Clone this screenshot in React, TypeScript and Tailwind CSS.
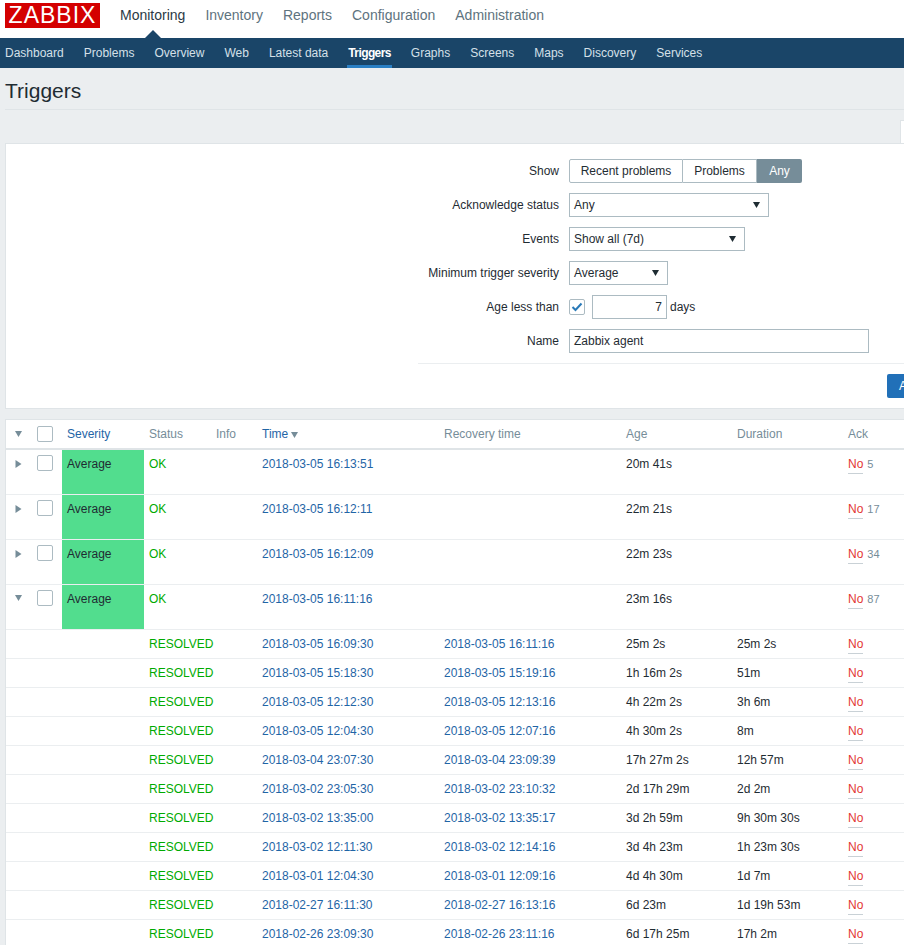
const font = "font-['Liberation_Sans',Arial,sans-serif]";

const mainTabs = ["Monitoring", "Inventory", "Reports", "Configuration", "Administration"];
const subTabs = ["Dashboard", "Problems", "Overview", "Web", "Latest data", "Triggers", "Graphs", "Screens", "Maps", "Discovery", "Services"];

const problems = [
  { time: "2018-03-05 16:13:51", age: "20m 41s", count: "5", open: false },
  { time: "2018-03-05 16:12:11", age: "22m 21s", count: "17", open: false },
  { time: "2018-03-05 16:12:09", age: "22m 23s", count: "34", open: false },
  { time: "2018-03-05 16:11:16", age: "23m 16s", count: "87", open: true },
];

const events = [
  ["2018-03-05 16:09:30", "2018-03-05 16:11:16", "25m 2s", "25m 2s"],
  ["2018-03-05 15:18:30", "2018-03-05 15:19:16", "1h 16m 2s", "51m"],
  ["2018-03-05 12:12:30", "2018-03-05 12:13:16", "4h 22m 2s", "3h 6m"],
  ["2018-03-05 12:04:30", "2018-03-05 12:07:16", "4h 30m 2s", "8m"],
  ["2018-03-04 23:07:30", "2018-03-04 23:09:39", "17h 27m 2s", "12h 57m"],
  ["2018-03-02 23:05:30", "2018-03-02 23:10:32", "2d 17h 29m", "2d 2m"],
  ["2018-03-02 13:35:00", "2018-03-02 13:35:17", "3d 2h 59m", "9h 30m 30s"],
  ["2018-03-02 12:11:30", "2018-03-02 12:14:16", "3d 4h 23m", "1h 23m 30s"],
  ["2018-03-01 12:04:30", "2018-03-01 12:09:16", "4d 4h 30m", "1d 7m"],
  ["2018-02-27 16:11:30", "2018-02-27 16:13:16", "6d 23m", "1d 19h 53m"],
  ["2018-02-26 23:09:30", "2018-02-26 23:11:16", "6d 17h 25m", "17h 2m"],
];

// first column is 1px short of the 57px gap because the table has a left border
const rowCols = "grid grid-cols-[56px_82px_67px_46px_182px_182px_111px_111px_1fr]";

function Caret({ className }: { className?: string }) {
  return (
    <svg width="7" height="6" viewBox="0 0 7 6" className={className}>
      <polygon points="0,0 7,0 3.5,6" fill="currentColor" />
    </svg>
  );
}

function Arrow({ className }: { className?: string }) {
  return (
    <svg width="7" height="8" viewBox="0 0 7 8" className={className}>
      <polygon points="0.5,0 6.5,4 0.5,8" fill="currentColor" />
    </svg>
  );
}

function Select({ value, width }: { value: string; width: string }) {
  return (
    <div className={`${width} h-6 border border-[#acbbc2] bg-white pl-1 pr-[8px] flex items-center justify-between text-[#1f2c33]`}>
      <span>{value}</span>
      <Caret className="text-[#1f2c33]" />
    </div>
  );
}

function Box({ className = "" }: { className?: string }) {
  return <div className={`w-4 h-4 rounded-[2px] border border-[#acbbc2] bg-white ${className}`} />;
}

function FormRow({ label, children }: { label: string; children: React.ReactNode }) {
  return (
    <div className="flex items-center h-6">
      <div className="w-[553px] text-right text-[#1f2c33]">{label}</div>
      <div className="ml-[10px] flex items-center">{children}</div>
    </div>
  );
}

function No({ count }: { count?: string }) {
  return (
    <div className="flex items-start">
      <span className="text-[#e33734] border-b border-[#c9d1d6] leading-[14px] pb-[2px]">No</span>
      {count && <span className="ml-1 text-[11px] text-[#768d99] leading-[14px]">{count}</span>}
    </div>
  );
}

export default function App() {
  return (
    <div className={`${font} w-[904px] h-[945px] overflow-hidden bg-[#ebeef0] text-xs text-[#1f2c33]`}>
      {/* Top menu */}
      <div className="h-[38px] bg-white flex items-start pl-[5px]">
        <div className="mt-[3px] w-[95px] h-[25px] bg-[#d40000] text-white text-[23px] leading-[25px] tracking-[1px] text-center">
          ZABBIX
        </div>
        <div className="ml-5 flex gap-5 text-sm leading-[30px]">
          {mainTabs.map((t, i) => (
            <div key={t} className={`relative ${i === 0 ? "text-[#2b3a45]" : "text-[#5e737e]"}`}>
              {t}
              {i === 0 && (
                <div className="absolute left-[25px] top-[30px] w-0 h-0 border-x-[8px] border-x-transparent border-b-[8px] border-b-[#1a4568]" />
              )}
            </div>
          ))}
        </div>
      </div>
      <div className="h-[30px] bg-[#1a4568] flex gap-5 pl-[5px]">
        {subTabs.map((t) => (
          <div
            key={t}
            className={`leading-[30px] ${
              t === "Triggers" ? "text-white font-bold border-b-[3px] border-[#2a7fc4] h-[30px] -mx-px px-px tracking-[-0.6px]" : "text-[#d5e0e8]"
            }`}
          >
            {t}
          </div>
        ))}
      </div>

      {/* Title */}
      <div className="ml-[5px] h-[42px] border-b border-[#dfe4e7] text-[21px] leading-[45px] text-[#1f2c33]">Triggers</div>

      {/* Filter tab stub */}
      <div className="h-[33px] flex justify-end items-end">
        <div className="w-1 h-[23px] bg-white border-l border-t border-[#dfe4e7]" />
      </div>

      {/* Filter */}
      <div className="ml-[5px] h-[266px] bg-white border-y border-l border-[#dfe4e7] overflow-hidden pt-[15px]">
        <div className="flex flex-col gap-[10px]">
          <FormRow label="Show">
            <div className="flex h-6">
              <div className="w-[114px] border border-[#acbbc2] rounded-l-[2px] flex items-center justify-center">Recent problems</div>
              <div className="w-[74px] border-y border-r border-[#acbbc2] flex items-center justify-center">Problems</div>
              <div className="w-[45px] bg-[#768d99] text-white rounded-r-[2px] flex items-center justify-center">Any</div>
            </div>
          </FormRow>
          <FormRow label="Acknowledge status">
            <Select value="Any" width="w-[200px]" />
          </FormRow>
          <FormRow label="Events">
            <Select value="Show all (7d)" width="w-[176px]" />
          </FormRow>
          <FormRow label="Minimum trigger severity">
            <Select value="Average" width="w-[99px]" />
          </FormRow>
          <FormRow label="Age less than">
            <div className="w-4 h-4 rounded-[2px] border border-[#acbbc2] flex items-center justify-center">
              <svg width="12" height="10" viewBox="0 0 12 10">
                <path d="M1.5 5 L4.5 8 L10.5 1.5" fill="none" stroke="#2a7ab8" strokeWidth="2" />
              </svg>
            </div>
            <div className="ml-[7px] w-[75px] h-6 border border-[#acbbc2] text-right pr-1 leading-[22px]">7</div>
            <span className="ml-[3px]">days</span>
          </FormRow>
          <FormRow label="Name">
            <div className="w-[300px] h-6 border border-[#acbbc2] pl-1 leading-[22px]">Zabbix agent</div>
          </FormRow>
        </div>
        <div className="ml-[412px] mt-[10px] border-t border-[#ebeef0]" />
        <div className="ml-[881px] mt-[10px] w-[54px] h-6 bg-[#2170b8] rounded-[2px] text-white text-center leading-6">Apply</div>
      </div>

      {/* Table */}
      <div className="ml-[5px] mt-[10px] bg-white border-t border-l border-[#dfe4e7]">
        <div className={`${rowCols} h-[30px] border-b-[2px] border-[#dfe4e7] text-[#768d99] leading-[28px]`}>
          <div className="flex items-center h-[28px]">
            <Caret className="ml-[9px] text-[#768d99]" />
            <Box className="ml-[15px]" />
          </div>
          <div className="pl-[5px] text-[#1f65a6]">Severity</div>
          <div className="pl-[5px]">Status</div>
          <div className="pl-[5px]">Info</div>
          <div className="pl-[5px] h-[28px] text-[#1f65a6] flex items-center">
            Time
            <Caret className="ml-[3px] mt-[1px] text-[#768d99]" />
          </div>
          <div className="pl-[5px]">Recovery time</div>
          <div className="pl-[5px]">Age</div>
          <div className="pl-[5px]">Duration</div>
          <div className="pl-[5px]">Ack</div>
        </div>

        {problems.map((p) => (
          <div key={p.time} className={`${rowCols} h-[45px] border-b border-[#ebeef0]`}>
            <div className="flex items-start pt-[5px]">
              {p.open ? (
                <Caret className="ml-[9px] mt-[5px] text-[#768d99]" />
              ) : (
                <Arrow className="ml-[9px] mt-[5px] text-[#768d99]" />
              )}
              <Box className="ml-[15px]" />
            </div>
            <div className="bg-[#52dd8e] pl-[5px] pt-[7px] leading-[14px]">Average</div>
            <div className="pl-[5px] pt-[7px] leading-[14px] text-[#00aa00]">OK</div>
            <div />
            <div className="pl-[5px] pt-[7px] leading-[14px] text-[#1f65a6]">{p.time}</div>
            <div />
            <div className="pl-[5px] pt-[7px] leading-[14px]">{p.age}</div>
            <div />
            <div className="pl-[5px] pt-[7px]">
              <No count={p.count} />
            </div>
          </div>
        ))}

        {events.map((e) => (
          <div key={e[0]} className={`${rowCols} h-[29px] border-b border-[#ebeef0] leading-[14px] pt-[7px]`}>
            <div />
            <div />
            <div className="pl-[5px] text-[#00aa00] col-span-2">RESOLVED</div>
            <div className="pl-[5px] text-[#1f65a6]">{e[0]}</div>
            <div className="pl-[5px] text-[#1f65a6]">{e[1]}</div>
            <div className="pl-[5px]">{e[2]}</div>
            <div className="pl-[5px]">{e[3]}</div>
            <div className="pl-[5px]">
              <No />
            </div>
          </div>
        ))}
      </div>
    </div>
  );
}
